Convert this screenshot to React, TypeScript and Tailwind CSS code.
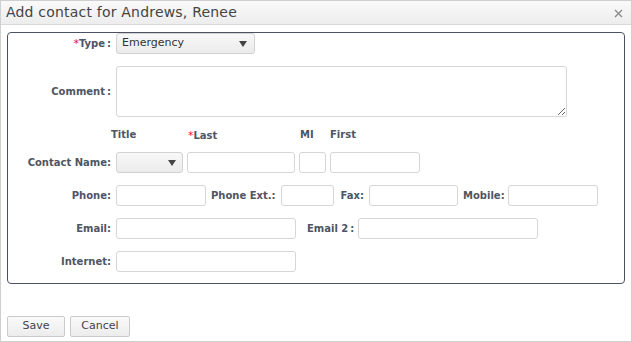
import React from 'react';

const font = { fontFamily: '"DejaVu Sans", Verdana, sans-serif' };

const Label: React.FC<{ text: string; req?: boolean; spaced?: boolean; className?: string }> = ({
  text,
  req,
  spaced,
  className = '',
}) => (
  <span className={`text-[10px] font-bold text-[#4e5563] whitespace-nowrap leading-none ${className}`}>
    {req && <span className="text-[#e8112d] font-normal text-[11px]">*</span>}
    {text}
    <span className={spaced ? 'ml-[2px]' : ''}>:</span>
  </span>
);

const Input: React.FC<{ w: string; className?: string }> = ({ w, className = '' }) => (
  <input
    type="text"
    className={`block ${w} h-[21px] border border-[#d6d6d6] rounded-[3px] bg-white outline-none ${className}`}
  />
);

const Caret = () => (
  <svg width="8" height="6" viewBox="0 0 8 6" className="fill-[#444]">
    <path d="M0 0 H8 L4 6 Z" />
  </svg>
);

const App: React.FC = () => {
  return (
    <div style={font} className="w-[632px] h-[342px] bg-white border border-[#cfcfcf] flex flex-col overflow-hidden">
      {/* title bar */}
      <div className="h-[24px] shrink-0 flex items-center justify-between pl-[5px] pr-[8px] bg-gradient-to-b from-[#fafafa] to-[#ededed] border-b border-[#d8d8d8]">
        <span className="text-[14px] tracking-[0.2px] text-[#444]">Add contact for Andrews, Renee</span>
        <svg width="9" height="9" viewBox="0 0 9 9" className="stroke-[#8a8a8a] mt-[1px]" strokeWidth="1.4">
          <path d="M1 1 L8 8 M8 1 L1 8" />
        </svg>
      </div>

      {/* fieldset */}
      <div className="ml-[6px] mr-[6px] mt-[7px] h-[252px] border border-[#4b5263] rounded-[4px] flex flex-col">
        {/* Type */}
        <div className="flex items-center h-[21px]">
          <div className="w-[103px] flex justify-end">
            <Label text="Type" req spaced />
          </div>
          <div className="ml-[5px] w-[139px] h-[21px] rounded-[3px] border border-[#d2d2d2] bg-gradient-to-b from-[#f8f8f8] to-[#ebebeb] flex items-center justify-between pl-[5px] pr-[7px]">
            <span className="text-[11px] text-[#333]">Emergency</span>
            <Caret />
          </div>
        </div>

        {/* Comment */}
        <div className="flex items-center mt-[12px]">
          <div className="w-[103px] flex justify-end">
            <Label text="Comment" spaced />
          </div>
          <textarea className="block ml-[5px] w-[451px] h-[51px] border border-[#d6d6d6] rounded-[3px] outline-none" />
        </div>

        {/* headers */}
        <div className="flex items-center mt-[12px] h-[12px] text-[10px] font-bold text-[#4e5563] leading-none">
          <span className="ml-[103px] w-[77px]">Title</span>
          <span className="w-[112px]">
            <span className="text-[#e8112d] font-normal text-[11px]">*</span>Last
          </span>
          <span className="w-[30px]">MI</span>
          <span>First</span>
        </div>

        {/* Contact Name */}
        <div className="flex items-center mt-[11px]">
          <div className="w-[103px] flex justify-end">
            <Label text="Contact Name" />
          </div>
          <div className="ml-[5px] w-[67px] h-[21px] rounded-[3px] border border-[#d2d2d2] bg-gradient-to-b from-[#f8f8f8] to-[#ebebeb] flex items-center justify-end pr-[6px]">
            <Caret />
          </div>
          <Input w="w-[108px]" className="ml-[4px]" />
          <Input w="w-[27px]" className="ml-[4px]" />
          <Input w="w-[90px]" className="ml-[4px]" />
        </div>

        {/* Phone */}
        <div className="flex items-center mt-[12px]">
          <div className="w-[103px] flex justify-end">
            <Label text="Phone" />
          </div>
          <Input w="w-[90px]" className="ml-[5px]" />
          <Label text="Phone Ext." className="ml-[5px]" />
          <Input w="w-[53px]" className="ml-[5px]" />
          <Label text="Fax" className="ml-[7px]" />
          <Input w="w-[89px]" className="ml-[5px]" />
          <Label text="Mobile" className="ml-[5px]" />
          <Input w="w-[90px]" className="ml-[3px]" />
        </div>

        {/* Email */}
        <div className="flex items-center mt-[12px]">
          <div className="w-[103px] flex justify-end">
            <Label text="Email" />
          </div>
          <Input w="w-[180px]" className="ml-[5px]" />
          <Label text="Email 2" spaced className="ml-[11px]" />
          <Input w="w-[180px]" className="ml-[4px]" />
        </div>

        {/* Internet */}
        <div className="flex items-center mt-[12px]">
          <div className="w-[103px] flex justify-end">
            <Label text="Internet" />
          </div>
          <Input w="w-[180px]" className="ml-[5px]" />
        </div>
      </div>

      {/* buttons */}
      <div className="flex gap-[5px] ml-[6px] mt-[32px]">
        <button className="w-[58px] h-[21px] rounded-[2px] border border-[#cbcbcb] bg-gradient-to-b from-[#fafafa] to-[#ececec] text-[11px] text-[#444]">
          Save
        </button>
        <button className="w-[60px] h-[21px] rounded-[2px] border border-[#cbcbcb] bg-gradient-to-b from-[#fafafa] to-[#ececec] text-[11px] text-[#444]">
          Cancel
        </button>
      </div>
    </div>
  );
};

export default App;
